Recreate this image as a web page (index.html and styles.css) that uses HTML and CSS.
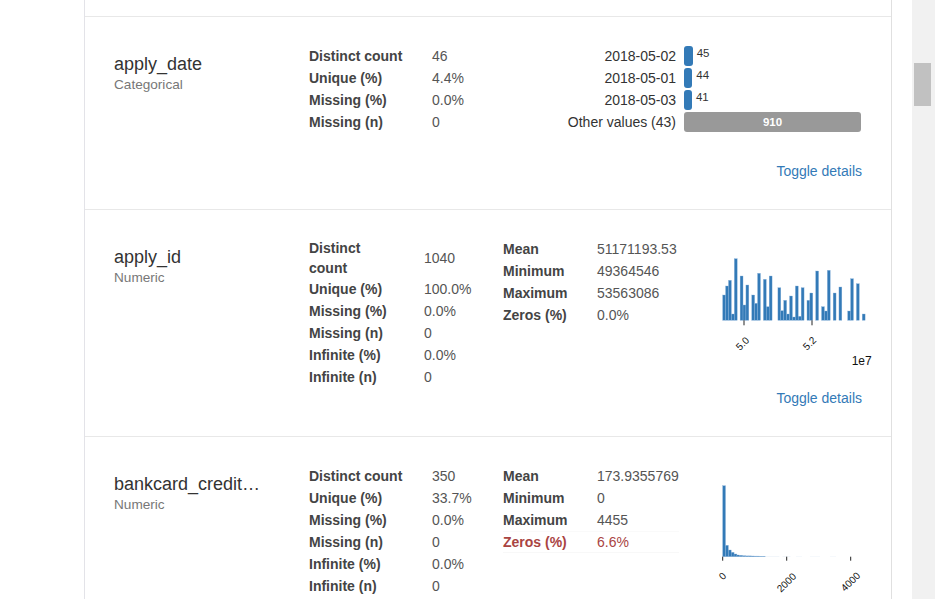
FILE: index.html
```html
<!DOCTYPE html>
<html>
<head>
<meta charset="utf-8">
<link rel="stylesheet" href="styles.css">
</head>
<body>
<div class="page">
  <div class="main">
    <div class="container">
      <div class="spacer"></div>

      <!-- apply_date -->
      <div class="var-row">
        <div class="cols">
          <div class="name-col">
            <div class="var-name">apply_date</div>
            <div class="var-type">Categorical</div>
          </div>
          <div class="col-stats">
            <table class="stats">
              <tr><th class="w123">Distinct count</th><td>46</td></tr>
              <tr><th>Unique (%)</th><td>4.4%</td></tr>
              <tr><th>Missing (%)</th><td>0.0%</td></tr>
              <tr><th>Missing (n)</th><td>0</td></tr>
            </table>
          </div>
          <div class="freq">
            <div class="frow">
              <span class="flabel">2018-05-02</span>
              <span class="fcell"><span class="fbar" style="width:8.7px"></span><span class="fcount">45</span></span>
            </div>
            <div class="frow">
              <span class="flabel">2018-05-01</span>
              <span class="fcell"><span class="fbar" style="width:8.3px"></span><span class="fcount">44</span></span>
            </div>
            <div class="frow">
              <span class="flabel">2018-05-03</span>
              <span class="fcell"><span class="fbar" style="width:7.9px"></span><span class="fcount">41</span></span>
            </div>
            <div class="frow">
              <span class="flabel">Other values (43)</span>
              <span class="fcell"><span class="fbar other">910</span></span>
            </div>
          </div>
        </div>
        <div class="toggle toggle-spaced"><a class="toggle-link">Toggle details</a></div>
      </div>

      <!-- apply_id -->
      <div class="var-row">
        <div class="cols">
          <div class="name-col">
            <div class="var-name">apply_id</div>
            <div class="var-type">Numeric</div>
          </div>
          <div class="col-stats">
            <table class="stats">
              <tr><th class="w85">Distinct count</th><td>1040</td></tr>
              <tr><th>Unique (%)</th><td>100.0%</td></tr>
              <tr><th>Missing (%)</th><td>0.0%</td></tr>
              <tr><th>Missing (n)</th><td>0</td></tr>
              <tr><th>Infinite (%)</th><td>0.0%</td></tr>
              <tr><th>Infinite (n)</th><td>0</td></tr>
            </table>
          </div>
          <div class="col-stats2">
            <table class="stats">
              <tr><th class="w94">Mean</th><td>51171193.53</td></tr>
              <tr><th>Minimum</th><td>49364546</td></tr>
              <tr><th>Maximum</th><td>53563086</td></tr>
              <tr><th>Zeros (%)</th><td>0.0%</td></tr>
            </table>
          </div>
          <div class="col-hist">
            <svg class="hist" width="172" height="140" viewBox="0 0 172 140">
              <g class="bars">
                <rect x="22.67" y="57.0" width="2.91" height="25.3"/>
                <rect x="25.58" y="48.0" width="2.91" height="34.3"/>
                <rect x="28.48" y="42.3" width="2.91" height="40"/>
                <rect x="31.39" y="76.0" width="2.91" height="6.3"/>
                <rect x="34.30" y="20.7" width="2.91" height="61.6"/>
                <rect x="40.11" y="38.0" width="2.91" height="44.3"/>
                <rect x="43.02" y="67.0" width="2.91" height="15.3"/>
                <rect x="45.93" y="47.0" width="2.91" height="35.3"/>
                <rect x="51.74" y="57.0" width="2.91" height="25.3"/>
                <rect x="54.65" y="65.3" width="2.91" height="17"/>
                <rect x="57.55" y="35.3" width="2.91" height="47"/>
                <rect x="63.37" y="41.3" width="2.91" height="41"/>
                <rect x="66.28" y="68.7" width="2.91" height="13.6"/>
                <rect x="69.18" y="38.0" width="2.91" height="44.3"/>
                <rect x="77.90" y="49.7" width="2.91" height="32.6"/>
                <rect x="80.81" y="72.7" width="2.91" height="9.6"/>
                <rect x="83.72" y="62.3" width="2.91" height="20"/>
                <rect x="86.62" y="76.0" width="2.91" height="6.3"/>
                <rect x="89.53" y="58.0" width="2.91" height="24.3"/>
                <rect x="92.44" y="79.0" width="2.91" height="3.3"/>
                <rect x="95.35" y="48.0" width="2.91" height="34.3"/>
                <rect x="98.25" y="78.3" width="2.91" height="4"/>
                <rect x="101.16" y="49.7" width="2.91" height="32.6"/>
                <rect x="106.97" y="62.3" width="2.91" height="20"/>
                <rect x="109.88" y="55.0" width="2.91" height="27.3"/>
                <rect x="115.69" y="33.0" width="2.91" height="49.3"/>
                <rect x="121.51" y="68.7" width="2.91" height="13.6"/>
                <rect x="124.42" y="73.0" width="2.91" height="9.3"/>
                <rect x="127.32" y="32.3" width="2.91" height="50"/>
                <rect x="133.14" y="55.0" width="2.91" height="27.3"/>
                <rect x="138.95" y="49.0" width="2.91" height="33.3"/>
                <rect x="147.67" y="73.0" width="2.91" height="9.3"/>
                <rect x="150.58" y="40.7" width="2.91" height="41.6"/>
                <rect x="156.39" y="45.7" width="2.91" height="36.6"/>
                <rect x="162.21" y="76.0" width="2.91" height="6.3"/>
              </g>
              <g class="ticks">
                <line x1="44" y1="82.3" x2="44" y2="87.3"/>
                <line x1="112" y1="82.3" x2="112" y2="87.3"/>
              </g>
              <text class="tick-label" x="42.5" y="105.5" text-anchor="middle" dominant-baseline="central" transform="rotate(-45 42.5 105.5)">5.0</text>
              <text class="tick-label" x="109.5" y="105.3" text-anchor="middle" dominant-baseline="central" transform="rotate(-45 109.5 105.3)">5.2</text>
              <text class="offset-label" x="171.7" y="127" text-anchor="end">1e7</text>
            </svg>
          </div>
        </div>
        <div class="toggle"><a class="toggle-link">Toggle details</a></div>
      </div>

      <!-- bankcard_credit -->
      <div class="var-row">
        <div class="cols">
          <div class="name-col">
            <div class="var-name">bankcard_credit…</div>
            <div class="var-type">Numeric</div>
          </div>
          <div class="col-stats">
            <table class="stats">
              <tr><th class="w123">Distinct count</th><td>350</td></tr>
              <tr><th>Unique (%)</th><td>33.7%</td></tr>
              <tr><th>Missing (%)</th><td>0.0%</td></tr>
              <tr><th>Missing (n)</th><td>0</td></tr>
              <tr><th>Infinite (%)</th><td>0.0%</td></tr>
              <tr><th>Infinite (n)</th><td>0</td></tr>
            </table>
          </div>
          <div class="col-stats2">
            <table class="stats">
              <tr><th class="w94">Mean</th><td>173.9355769</td></tr>
              <tr><th>Minimum</th><td>0</td></tr>
              <tr><th>Maximum</th><td>4455</td></tr>
              <tr class="alert"><th>Zeros (%)</th><td>6.6%</td></tr>
            </table>
          </div>
          <div class="col-hist">
            <svg class="hist" width="172" height="140" viewBox="0 0 172 140">
              <g class="bars">
                <rect x="22.67" y="20.7" width="2.85" height="71"/>
                <rect x="25.52" y="80.3" width="2.85" height="11.4"/>
                <rect x="28.37" y="85.0" width="2.85" height="6.7"/>
                <rect x="31.22" y="87.3" width="2.85" height="4.4"/>
                <rect x="34.07" y="89.0" width="2.85" height="2.7"/>
                <rect x="36.92" y="90.0" width="2.85" height="1.7"/>
                <rect x="39.77" y="90.3" width="2.85" height="1.4"/>
                <rect x="42.62" y="90.7" width="2.85" height="1.0"/>
                <rect x="45.47" y="90.9" width="2.85" height="0.8"/>
                <rect x="48.32" y="90.9" width="2.85" height="0.8"/>
                <rect x="51.17" y="91.0" width="2.85" height="0.7"/>
                <rect x="54.02" y="91.1" width="2.85" height="0.6"/>
                <rect x="56.87" y="91.1" width="2.85" height="0.6"/>
                <rect x="59.72" y="91.2" width="2.85" height="0.5"/>
                <rect x="62.57" y="91.2" width="2.85" height="0.5"/>
              </g>
              <g class="bars faint">
                <rect x="65.42" y="91.3" width="14" height="0.4"/>
                <rect x="82.5" y="91.3" width="8" height="0.4"/>
                <rect x="96" y="91.4" width="6" height="0.3"/>
                <rect x="110" y="91.4" width="10" height="0.3"/>
                <rect x="130" y="91.4" width="6" height="0.3"/>
              </g>
              <g class="ticks">
                <line x1="22.7" y1="91.7" x2="22.7" y2="95.7"/>
                <line x1="86.7" y1="91.7" x2="86.7" y2="95.7"/>
                <line x1="150.7" y1="91.7" x2="150.7" y2="95.7"/>
              </g>
              <text class="tick-label" x="22.5" y="111" text-anchor="middle" dominant-baseline="central" transform="rotate(-45 22.5 111)">0</text>
              <text class="tick-label" x="86.5" y="117.5" text-anchor="middle" dominant-baseline="central" transform="rotate(-45 86.5 117.5)">2000</text>
              <text class="tick-label" x="150.5" y="116.7" text-anchor="middle" dominant-baseline="central" transform="rotate(-45 150.5 116.7)">4000</text>
            </svg>
          </div>
        </div>
      </div>
    </div>
  </div>
  <div class="scrollbar"><div class="thumb"></div></div>
</div>
</body>
</html>
```

FILE: styles.css
```css
* { box-sizing: border-box; }

html, body {
  margin: 0;
  padding: 0;
  height: 599px;
  overflow: hidden;
  background: #fff;
  font-family: "Liberation Sans", Arial, sans-serif;
  color: #333;
}

.page {
  display: flex;
  height: 599px;
}

.main {
  width: 912px;
  flex: none;
  height: 599px;
  overflow: hidden;
}

.container {
  margin-left: 84px;
  width: 808px;
  border-left: 1px solid #e3e3e8;
  border-right: 1px solid #e0e0e0;
  min-height: 700px;
}

.spacer { height: 16px; }

.var-row {
  border-top: 1px solid #e8e8e8;
  padding: 28px 29px 28px 29px;
}

.cols {
  display: flex;
  align-items: flex-start;
}

.name-col {
  width: 195px;
  flex: none;
  padding-top: 9px;
}

.var-name {
  font-size: 18px;
  line-height: 20px;
  color: #333;
  white-space: nowrap;
}

.var-type {
  font-size: 13.6px;
  line-height: 17px;
  margin-top: 2px;
  color: #777;
}

.col-stats { width: 194px; flex: none; }
.col-stats2 { width: 197px; flex: none; }
.col-hist { width: 161px; flex: none; }

.hist { display: block; overflow: visible; }
.hist .bars rect { fill: #337ab7; stroke: #8fb5dc; stroke-width: 0.35; }
.hist .bars.faint rect { fill: #dfe9f3; stroke: none; }
.hist .ticks line { stroke: #222; stroke-width: 1; }
.tick-label { font-family: "Liberation Sans", Arial, sans-serif; font-size: 10px; fill: #111; }
.offset-label { font-family: "Liberation Sans", Arial, sans-serif; font-size: 12px; fill: #111; }

.stats {
  border-collapse: collapse;
  font-size: 14px;
  line-height: 20px;
}

.stats th, .stats td {
  padding: 1px 0;
  vertical-align: middle;
  text-align: left;
}

.stats th {
  font-weight: bold;
  color: #444;
  white-space: nowrap;
}

.stats td {
  color: #555;
  white-space: nowrap;
}

.stats th.w123 { width: 123px; }
.stats th.w94 { width: 94px; }
.stats th.w85 {
  width: 115px;
  padding: 0 30px 0 0;
  white-space: normal;
}

.stats tr.alert th,
.stats tr.alert td {
  color: #a94442;
  border-top: 1px solid #fafafa;
  border-bottom: 1px solid #f8f8f8;
  padding: 0;
}

.freq {
  width: 358px;
  flex: none;
}

.frow {
  display: flex;
  height: 22px;
  align-items: center;
  font-size: 14px;
}

.flabel {
  width: 173px;
  text-align: right;
  color: #333;
  white-space: nowrap;
  line-height: 20px;
}

.fcell {
  margin-left: 8px;
  width: 177px;
  display: flex;
  align-items: flex-start;
  height: 20px;
}

.fbar {
  display: block;
  height: 20px;
  background: #337ab7;
  border-radius: 3px;
}

.fbar.other {
  width: 177px;
  background: #999;
  color: #fff;
  font-weight: bold;
  font-size: 11.5px;
  line-height: 20px;
  text-align: center;
}

.fcount {
  font-size: 11.5px;
  line-height: 15px;
  margin-left: 4px;
  color: #333;
}

.toggle {
  text-align: right;
  font-size: 14px;
  line-height: 20px;
}

.toggle-spaced { margin-top: 28px; }

.toggle-link {
  color: #337ab7;
  text-decoration: none;
}

.scrollbar {
  width: 23px;
  flex: none;
  height: 599px;
  background: #f1f1f1;
  padding-top: 63px;
  padding-left: 2px;
}

.thumb {
  width: 17px;
  height: 43px;
  background: #c1c1c1;
}
```
